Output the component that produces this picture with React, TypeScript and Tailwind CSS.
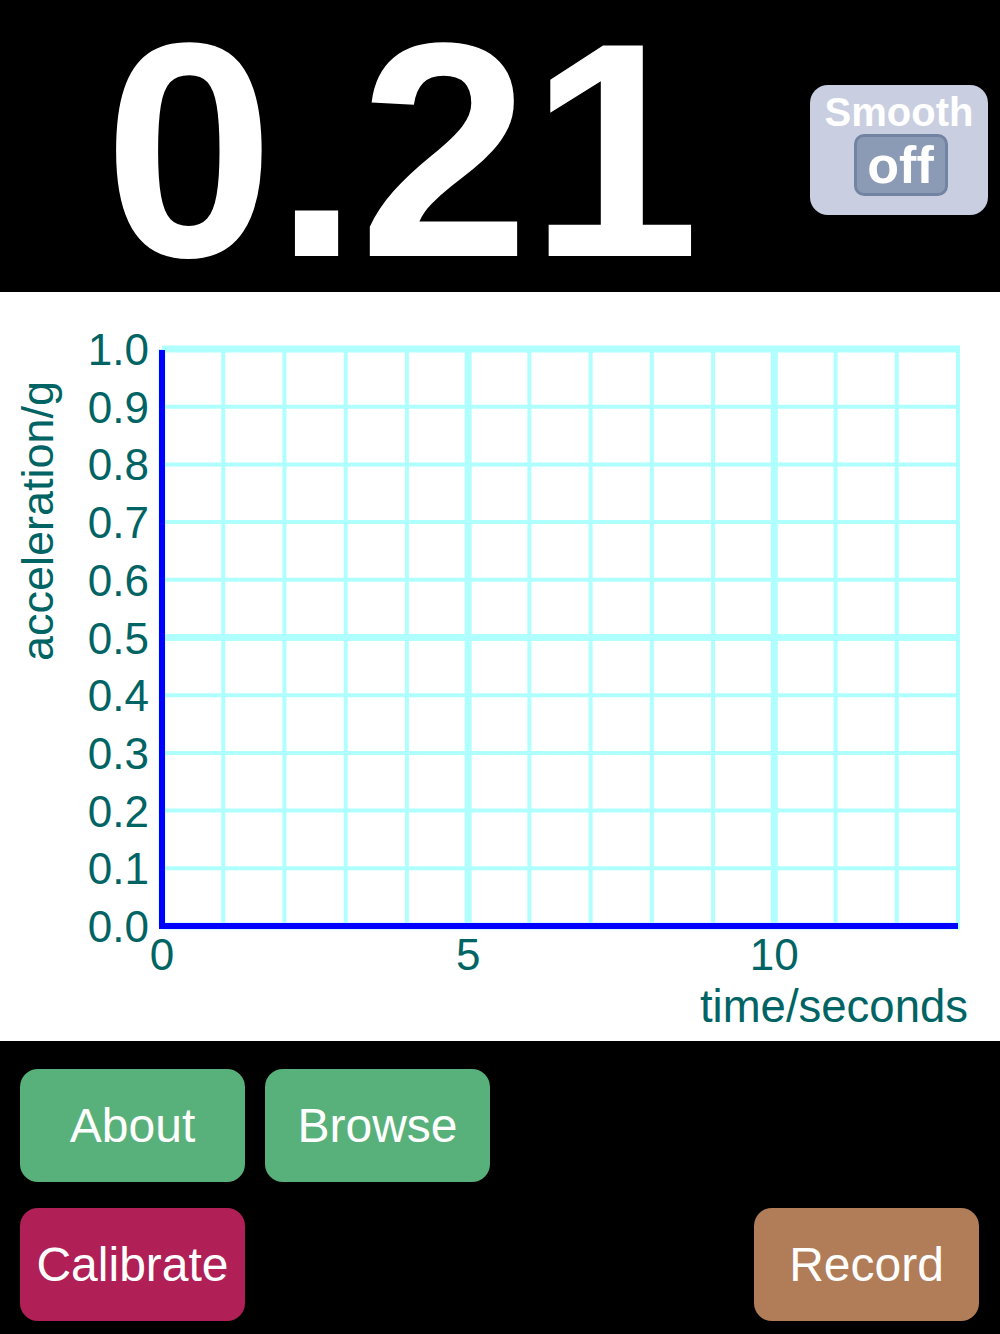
import React from 'react'

const font = "font-['Liberation_Sans',Arial,sans-serif]"

const X0 = 162
const X1 = 958
const Y0 = 57
const Y1 = 634
const colW = (X1 - X0) / 13
const rowH = (Y1 - Y0) / 10
const labelColor = '#006464'
const gridColor = '#b0ffff'

const Chart = () => {
  const cols = Array.from({ length: 14 }, (_, i) => i)
  const rows = Array.from({ length: 11 }, (_, j) => j)
  return (
    <svg width="1000" height="749" viewBox="0 0 1000 749" className="block">
      {cols.map((i) => (
        <line
          key={'v' + i}
          x1={X0 + i * colW}
          x2={X0 + i * colW}
          y1={Y0}
          y2={Y1}
          stroke={gridColor}
          strokeWidth={i % 5 === 0 ? 7 : 4}
        />
      ))}
      {rows.map((j) => (
        <line
          key={'h' + j}
          x1={X0}
          x2={X1 + 2}
          y1={Y1 - j * rowH}
          y2={Y1 - j * rowH}
          stroke={gridColor}
          strokeWidth={j % 5 === 0 ? 7 : 4}
        />
      ))}
      <line x1={X0} x2={X0} y1={Y0 + 1} y2={Y1 + 3} stroke="#0000ff" strokeWidth={6} />
      <line x1={X0 - 3} x2={X1} y1={Y1} y2={Y1} stroke="#0000ff" strokeWidth={6} />

      <g fill={labelColor} fontFamily="'Liberation Sans', Arial, sans-serif" fontSize={44}>
        {rows.map((j) => (
          <text key={'yl' + j} x={149} y={Y1 - j * rowH + 16} textAnchor="end">
            {(j / 10).toFixed(1)}
          </text>
        ))}
        {[0, 5, 10].map((s) => (
          <text key={'xl' + s} x={X0 + s * colW} y={678} textAnchor="middle">
            {s}
          </text>
        ))}
        <text x={968} y={730} textAnchor="end" fontSize={45.5}>
          time/seconds
        </text>
        <text x={53} y={229} textAnchor="middle" fontSize={45} transform="rotate(-90 53 229)">
          acceleration/g
        </text>
      </g>
    </svg>
  )
}

const Button = ({ label, color }: { label: string; color: string }) => (
  <div
    className={`w-[225px] h-[113px] rounded-[18px] flex items-center justify-center text-white text-[48px] leading-none ${color}`}
  >
    {label}
  </div>
)

export default function App() {
  return (
    <div className={`w-[1000px] h-[1334px] bg-black flex flex-col ${font}`}>
      <div className="h-[292px] flex items-start">
        <div className="pl-[104px] pt-[8px] text-white font-bold text-[306px] leading-[284px]">
          0.21
        </div>
        <div className="ml-auto mr-[12px] mt-[85px] w-[178px] h-[130px] rounded-[18px] bg-[#c9cfe0] flex flex-col items-center pt-[7px]">
          <div className="text-white font-bold text-[40px] leading-none h-[40px]">Smooth</div>
          <div className="mt-[2px] ml-[3px] w-[94px] h-[62px] rounded-[10px] bg-[#8b9bb6] border-[3px] border-[#7384a3] flex items-center justify-center">
            <span className="text-white font-bold text-[52px] leading-none">off</span>
          </div>
        </div>
      </div>

      <div className="h-[749px] bg-white">
        <Chart />
      </div>

      <div className="flex-1 flex flex-col gap-[26px] pt-[28px] pl-[20px] pr-[21px]">
        <div className="flex gap-[20px]">
          <Button label="About" color="bg-[#58b17b]" />
          <Button label="Browse" color="bg-[#58b17b]" />
        </div>
        <div className="flex justify-between">
          <Button label="Calibrate" color="bg-[#b02057]" />
          <Button label="Record" color="bg-[#b17c58]" />
        </div>
      </div>
    </div>
  )
}
